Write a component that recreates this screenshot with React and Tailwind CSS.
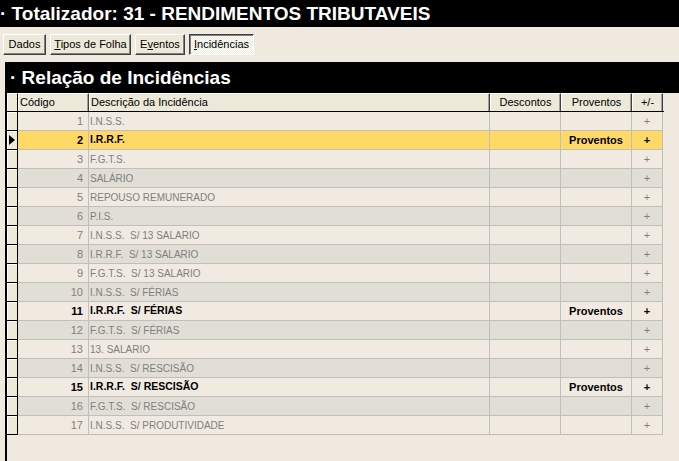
import React from "react";

const rows = [
  [1, "I.N.S.S."],
  [2, "I.R.R.F.", true],
  [3, "F.G.T.S."],
  [4, "SALÁRIO"],
  [5, "REPOUSO REMUNERADO"],
  [6, "P.I.S."],
  [7, "I.N.S.S.  S/ 13 SALARIO"],
  [8, "I.R.R.F.  S/ 13 SALARIO"],
  [9, "F.G.T.S.  S/ 13 SALARIO"],
  [10, "I.N.S.S.  S/ FÉRIAS"],
  [11, "I.R.R.F.  S/ FÉRIAS", true],
  [12, "F.G.T.S.  S/ FÉRIAS"],
  [13, "13. SALARIO"],
  [14, "I.N.S.S.  S/ RESCISÃO"],
  [15, "I.R.R.F.  S/ RESCISÃO", true],
  [16, "F.G.T.S.  S/ RESCISÃO"],
  [17, "I.N.S.S.  S/ PRODUTIVIDADE"],
];

function TabButton({ children, w, pressed }) {
  return (
    <div
      className={
        "h-[21px] flex items-center justify-center border " +
        w +
        " " +
        (pressed
          ? "border-t-[#404040] border-l-[#404040] border-r-white border-b-white shadow-[inset_1px_1px_0_#808080] bg-[repeating-conic-gradient(#ffffff_0_25%,#ece9d8_0_50%)] bg-[length:2px_2px]"
          : "border-t-white border-l-white border-r-[#404040] border-b-[#404040] shadow-[inset_-1px_-1px_0_#808080] bg-[#ece9d8]")
      }
    >
      <span className="text-[11px] leading-none text-black">{children}</span>
    </div>
  );
}

function HeadCell({ w, children, align = "justify-center" }) {
  return (
    <div
      className={
        "h-full flex items-center border-t border-l border-t-white border-l-white border-r border-r-[#404040] shadow-[inset_-1px_0_0_#a0a0a0] bg-[#ece9d8] text-[11px] text-black px-[1px] " +
        w +
        " " +
        align
      }
    >
      {children}
    </div>
  );
}

export default function App() {
  return (
    <div className="w-[679px] h-[461px] overflow-hidden bg-[#f0e9e0] font-['Liberation_Sans',Arial,sans-serif] flex flex-col">
      <div className="h-[27px] bg-black flex items-center shrink-0">
        <span className="text-white font-bold text-[19px] leading-none whitespace-pre">
          · Totalizador: 31 - RENDIMENTOS TRIBUTAVEIS
        </span>
      </div>

      <div className="flex items-start pl-[3px] pt-[7px] h-[35px] shrink-0">
        <TabButton w="w-[43px]">Dados</TabButton>
        <div className="w-[4px]" />
        <TabButton w="w-[81px]">
          <u className="underline-offset-1">T</u>ipos de Folha
        </TabButton>
        <div className="w-[4px]" />
        <TabButton w="w-[50px]">
          E<u className="underline-offset-1">v</u>entos
        </TabButton>
        <div className="w-[4px]" />
        <TabButton w="w-[65px]" pressed>
          <u className="underline-offset-1">I</u>ncidências
        </TabButton>
      </div>

      <div className="ml-[5px] flex-1 flex flex-col">
        <div className="h-[31px] bg-black flex items-center pl-[5px] shrink-0">
          <span className="text-white font-bold text-[19px] leading-none whitespace-pre">
            · Relação de Incidências
          </span>
        </div>

        <div className="flex-1 border-l-2 border-black flex flex-col">
          <div className="flex h-[19px] border-b border-black w-[657px]">
            <div className="w-[11px] h-full border-t border-l border-t-white border-l-white border-r border-r-black bg-[#ece9d8]" />
            <HeadCell w="w-[71px]" align="justify-start">Código</HeadCell>
            <HeadCell w="w-[401px]" align="justify-start">Descrição da Incidência</HeadCell>
            <HeadCell w="w-[71px]">Descontos</HeadCell>
            <HeadCell w="w-[71px]">Proventos</HeadCell>
            <HeadCell w="w-[31px]">+/-</HeadCell>
          </div>

          {rows.map(([n, desc, bold]) => {
            const selected = n === 2;
            const bg = selected
              ? "bg-[#ffd966]"
              : n % 2 === 0
              ? "bg-[#e1ded5]"
              : "bg-[#f0eae1]";
            const txt = bold ? "text-black font-bold" : "text-[#808080]";
            return (
              <div key={n} className="flex h-[19px]">
                <div className="w-[11px] h-full border-r border-b border-black shadow-[inset_1px_1px_0_#ffffff] bg-[#ece9d8] flex items-center justify-center">
                  {selected && (
                    <svg width="6" height="10" viewBox="0 0 6 10" className="ml-[-1px]">
                      <polygon points="0,0 6,5 0,10" fill="#000" />
                    </svg>
                  )}
                </div>
                <div className={"flex h-full border-b border-[#bfbfbf] text-[11px] " + bg + " " + txt}>
                  <div className="w-[71px] h-full border-r border-[#bfbfbf] flex items-center justify-end pr-[5px]">
                    {n}
                  </div>
                  <div
                    className={
                      "w-[401px] h-full border-r border-[#bfbfbf] flex items-center pl-[1px] whitespace-pre " +
                      (bold ? "text-[10.5px]" : "text-[10px]")
                    }
                  >
                    {desc}
                  </div>
                  <div className="w-[71px] h-full border-r border-[#bfbfbf]" />
                  <div className="w-[71px] h-full border-r border-[#bfbfbf] flex items-center justify-center">
                    {bold ? "Proventos" : ""}
                  </div>
                  <div className="w-[31px] h-full border-r border-[#bfbfbf] flex items-center justify-center">
                    +
                  </div>
                </div>
              </div>
            );
          })}
        </div>
      </div>
    </div>
  );
}
